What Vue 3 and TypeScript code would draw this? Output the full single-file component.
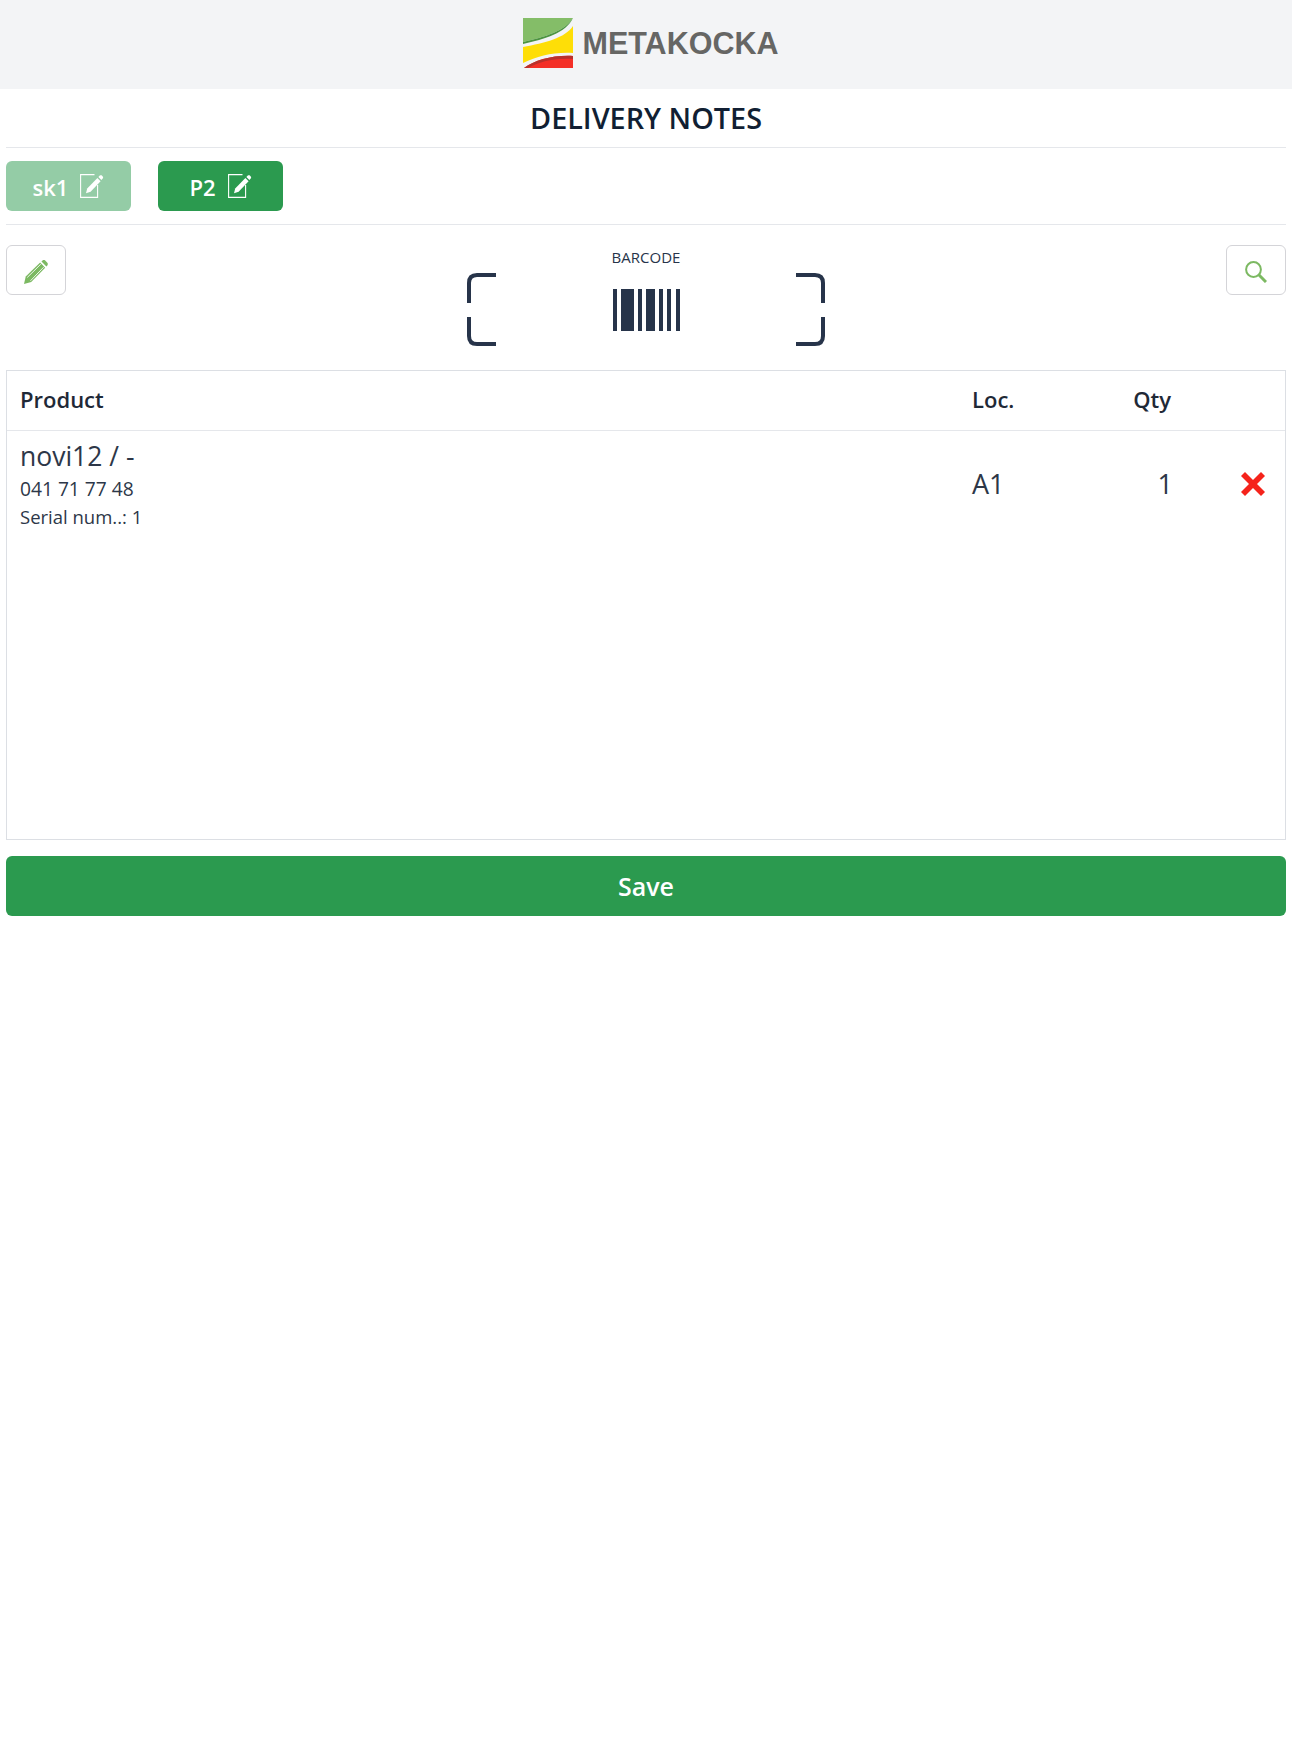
<script setup lang="ts">
import { ref } from 'vue';

const tabs = ref([
  { name: 'sk1', active: false },
  { name: 'P2', active: true }
]);

const items = ref([
  { title: 'novi12 / -', code: '041 71 77 48', serial: 'Serial num..: 1', loc: 'A1', qty: 1 }
]);
</script>

<template>
  <div class="page">
    <header class="top">
      <svg class="logo" width="50" height="50" viewBox="0 0 50 50">
        <path d="M0 0H50C42 13 22 19 0 24Z" fill="#84bd68" />
        <path d="M0 24C22 19 42 13 50 0C43 15 22 21 0 26Z" fill="#4c9440" />
        <path d="M0 29C22 25 42 20 50 8V35C30 34 15 38 0 45Z" fill="#fede07" />
        <path d="M1 50C12 42 30 37 50 38V50Z" fill="#f42f27" />
        <path d="M1 50C12 42 30 37 50 38V41C30 40 16 44 5 50Z" fill="#b8312c" />
      </svg>
      <span class="brand">METAKOCKA</span>
    </header>

    <h1 class="title">DELIVERY NOTES</h1>

    <div class="tabs">
      <button v-for="tab in tabs" :key="tab.name" class="tab" :class="{ faded: !tab.active }">
        <span>{{ tab.name }}</span>
        <svg width="24" height="24" viewBox="0 0 24 24" fill="none">
          <path d="M14.5 .6H.6V23.4H17.6V11" stroke="#fff" stroke-width="1.1" />
          <path d="M6 19.2 7.2 14.4 17.4 4 20.6 7.2 10.6 17.8Z" fill="#fff" />
          <path d="M18.4 3 19.8 1.6C20.5 1 21.3 1 21.9 1.6L22.7 2.4C23.3 3 23.3 3.8 22.7 4.5L21.4 6Z" fill="#fff" />
        </svg>
      </button>
    </div>

    <div class="tools">
      <button class="tool">
        <svg width="24" height="24" viewBox="0 0 22 22">
          <path d="M0 22 1.6 15.2 14.8 2.4 19.4 7 6.6 20.2Z" fill="#7cb962" />
          <path d="M3 16 15.4 3.8M6 19 18 6.6" stroke="#fff" stroke-width=".8" />
          <path d="M16 1.4 17 .5C17.7-.1 18.7-.1 19.4.5L21.4 2.5C22 3.2 22 4.2 21.4 5L20.5 6Z" fill="#7cb962" />
        </svg>
      </button>

      <div class="scanner">
        <span class="scan-label">BARCODE</span>
        <svg width="358" height="73" viewBox="0 0 358 73" fill="#27344a">
          <g fill="none" stroke="#27344a" stroke-width="4">
            <path d="M29 2H10Q2 2 2 10V30" />
            <path d="M2 44V63Q2 71 10 71H29" />
            <path d="M329 2H348Q356 2 356 10V30" />
            <path d="M356 44V63Q356 71 348 71H329" />
          </g>
          <rect x="146" y="16" width="4" height="42" />
          <rect x="154" y="16" width="13" height="42" />
          <rect x="171" y="16" width="4" height="42" />
          <rect x="179" y="16" width="9" height="42" />
          <rect x="192" y="16" width="4" height="42" />
          <rect x="200" y="16" width="4" height="42" />
          <rect x="209" y="16" width="4" height="42" />
        </svg>
      </div>

      <button class="tool">
        <svg width="22" height="22" viewBox="0 0 22 22" fill="none" stroke="#7cb962">
          <circle cx="8.5" cy="8.5" r="7.4" stroke-width="2" />
          <path d="M13.8 13.8 21 21" stroke-width="3" />
        </svg>
      </button>
    </div>

    <section class="list">
      <div class="row head">
        <span>Product</span>
        <span>Loc.</span>
        <span class="qty">Qty</span>
        <span></span>
      </div>
      <div v-for="item in items" :key="item.code" class="row item">
        <div class="product">
          <div class="name">{{ item.title }}</div>
          <div class="code">{{ item.code }}</div>
          <div class="serial">{{ item.serial }}</div>
        </div>
        <span class="big">{{ item.loc }}</span>
        <span class="big qty">{{ item.qty }}</span>
        <svg class="remove" width="24" height="24" viewBox="0 0 24 24">
          <path d="M4 0 12 8 20 0 24 4 16 12 24 20 20 24 12 16 4 24 0 20 8 12 0 4Z" fill="#f5231b" />
        </svg>
      </div>
    </section>

    <button class="save">Save</button>
  </div>
</template>

<style scoped>
.page {
  width: 1292px;
  min-height: 1749px;
  background: #fff;
  color: #1f2937;
  font-family: "Open Sans", "Noto Sans", sans-serif;
}

.top {
  height: 89px;
  background: #f3f4f6;
  display: flex;
  align-items: center;
  justify-content: center;
  gap: 10px;
  padding-left: 9px;
  padding-bottom: 4px;
  box-sizing: border-box;
}

.logo {
  flex: none;
}

.brand {
  padding-top: 2px;
  font-family: "Liberation Sans", Arial, sans-serif;
  font-weight: 700;
  font-size: 30.5px;
  color: #666664;
}

.title {
  margin: 0 6px;
  height: 59px;
  box-sizing: border-box;
  border-bottom: 1px solid #e5e7eb;
  text-align: center;
  font-size: 28.8px;
  line-height: 58px;
  font-weight: 600;
  color: #111f33;
}

.tabs {
  margin: 0 6px;
  padding: 13px 0;
  display: flex;
  gap: 27px;
  border-bottom: 1px solid #e5e7eb;
}

button {
  font-family: inherit;
  cursor: pointer;
}

.tab {
  width: 125px;
  height: 50px;
  border: 0;
  border-radius: 6px;
  background: #2b9a4f;
  color: #fff;
  font-size: 22px;
  font-weight: 600;
  display: flex;
  align-items: center;
  justify-content: center;
  gap: 12px;
  padding: 0;
}

.tab span {
  padding-top: 2px;
}

.tab.faded {
  opacity: 0.5;
}

.tools {
  margin: 0 6px;
  padding-top: 20px;
  height: 145px;
  box-sizing: border-box;
  display: flex;
  justify-content: space-between;
  align-items: flex-start;
}

.tool {
  width: 60px;
  height: 50px;
  background: #fff;
  border: 1px solid #d4d4d8;
  border-radius: 6px;
  padding: 3px 0 0;
  display: flex;
  align-items: center;
  justify-content: center;
}

.scanner {
  display: flex;
  flex-direction: column;
  align-items: center;
}

.scan-label {
  font-size: 15px;
  line-height: 24px;
  color: #27344a;
}

.scanner svg {
  margin-top: 4px;
  display: block;
}

.list {
  margin: 0 6px;
  height: 470px;
  box-sizing: border-box;
  border: 1px solid #dcdfe4;
}

.row {
  display: grid;
  grid-template-columns: 952px 100px 100px 1fr;
  padding-left: 13px;
  align-items: center;
}

.head {
  height: 60px;
  padding-bottom: 3px;
  box-sizing: border-box;
  border-bottom: 1px solid #e5e7eb;
  font-size: 22px;
  font-weight: 600;
}

.qty {
  text-align: right;
}

.head .qty {
  padding-right: 1px;
}

.item {
  padding-top: 7px;
  padding-bottom: 7px;
  color: #2d3748;
}

.name {
  font-size: 26.5px;
  line-height: 37px;
}

.code {
  font-size: 19.2px;
  line-height: 28px;
}

.serial {
  font-size: 18.5px;
  line-height: 28px;
}

.big {
  margin-top: -2px;
  font-size: 27px;
}

.big.qty {
  margin-right: -1px;
}

.remove {
  justify-self: end;
  margin-top: -2px;
  margin-right: 20px;
}

.save {
  display: block;
  margin: 16px 6px 0;
  width: calc(100% - 12px);
  height: 60px;
  border: 0;
  border-radius: 6px;
  background: #2b9a4f;
  color: #fff;
  font-size: 25px;
  font-weight: 600;
}
</style>
